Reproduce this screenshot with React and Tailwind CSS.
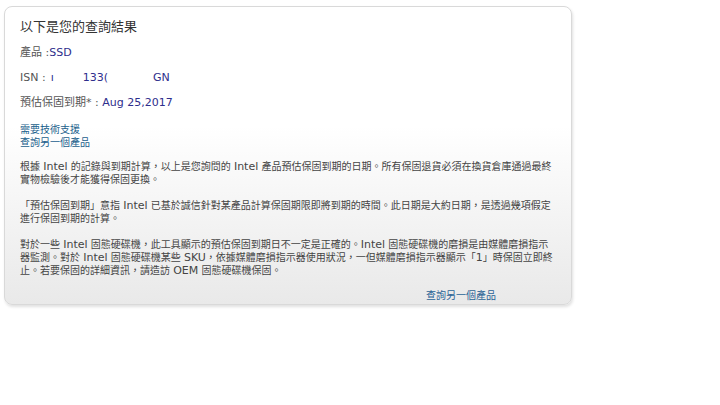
function L({ children }) {
  return <span className="text-[11px]">{children}</span>;
}

export default function App() {
  const font = { fontFamily: '"DejaVu Sans", "Noto Sans CJK TC", sans-serif' };
  return (
    <div className="w-[720px] h-[405px] bg-white pt-[6px] pl-[4px]" style={font}>
      <div className="w-[568px] h-[299px] rounded-[8px] border border-[#d9d9d9] shadow-[1px_2px_3px_rgba(0,0,0,0.12)] bg-gradient-to-b from-white from-[40%] to-[#e9e9e9] px-[15px] pt-[11px] flex flex-col">
        <div className="text-[13px] leading-[18px] text-[#333]">以下是您的查詢結果</div>
        <div className="mt-[10px] text-[11px] leading-[13px] h-[13px] whitespace-nowrap">
          <span className="text-[#555]">產品 :</span><span className="text-[#2e2e8c]">SSD</span>
        </div>
        <div className="mt-[12px] text-[11px] leading-[13px] h-[13px] whitespace-nowrap flex">
          <span className="text-[#555]">ISN : </span>
          <span className="text-[#2e2e8c] ml-[5px]">ı</span>
          <span className="text-[#2e2e8c] ml-[29px]">133(</span>
          <span className="text-[#2e2e8c] ml-[45px]">GN</span>
        </div>
        <div className="mt-[12px] text-[11px] leading-[13px] h-[13px] whitespace-nowrap">
          <span className="text-[#555]">預估保固到期* :</span><span className="text-[#2e2e8c]"> Aug 25,2017</span>
        </div>
        <div className="mt-[14px] text-[10px] leading-[13px] text-[#1b5f8c]">
          <div>需要技術支援</div>
          <div>查詢另一個產品</div>
        </div>
        <div className="mt-[11px] text-[10px] leading-[13px] text-[#444] whitespace-nowrap">
          <p>根據 <L>Intel</L> 的記錄與到期計算，以上是您詢問的 <L>Intel</L> 產品預估保固到期的日期。所有保固退貨必須在換貨倉庫通過最終<br />實物檢驗後才能獲得保固更換。</p>
          <p className="mt-[13px]">「預估保固到期」意指 <L>Intel</L> 已基於誠信針對某產品計算保固期限即將到期的時間。此日期是大約日期，是透過幾項假定<br />進行保固到期的計算。</p>
          <p className="mt-[13px]">對於一些 <L>Intel</L> 固態硬碟機，此工具顯示的預估保固到期日不一定是正確的。<L>Intel</L> 固態硬碟機的磨損是由媒體磨損指示<br />器監測。對於 <L>Intel</L> 固態硬碟機某些 <L>SKU</L>，依據媒體磨損指示器使用狀況，一但媒體磨損指示器顯示「<L>1</L>」時保固立即終<br />止。若要保固的詳細資訊，請造訪 <L>OEM</L> 固態硬碟機保固。</p>
        </div>
        <div className="mt-[12px] text-[10px] leading-[13px] text-[#2a6496] pl-[406px]">查詢另一個產品</div>
      </div>
    </div>
  );
}
